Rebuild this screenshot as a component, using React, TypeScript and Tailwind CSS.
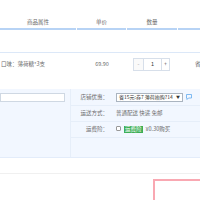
import React from 'react';

const font = { fontFamily: '"Noto Sans CJK SC", "Noto Sans", sans-serif' };

export default function App() {
  return (
    <div className="w-[200px] h-[200px] overflow-hidden bg-white text-[5.5px] text-[#6b6b6b]" style={font}>
      <div className="h-[17px]" />
      {/* header */}
      <div className="flex h-[13px] gap-px">
        <div className="w-[76px] shrink-0 border-b-2 border-[#b7d3f5] flex items-center justify-center">商品属性</div>
        <div className="w-[49px] shrink-0 border-b-2 border-[#b7d3f5] flex items-center justify-center">单价</div>
        <div className="w-[50px] shrink-0 border-b-2 border-[#b7d3f5] flex items-center justify-center">数量</div>
        <div className="flex-1 border-b-2 border-[#b7d3f5]" />
      </div>
      <div className="h-[22px]" />
      {/* item row */}
      <div className="border-t border-[#dce8f8] flex items-center h-[31px] pb-[8px]">
        <div className="w-[77px] shrink-0 pl-px">口味：薄荷糖*3支</div>
        <div className="w-[50px] shrink-0 text-center">69.90</div>
        <div className="w-[68px] shrink-0 flex items-center pl-[6px]">
          <div className="flex h-[13px] border border-[#d7dfea] text-[#999]">
            <div className="w-[10px] flex items-center justify-center border-r border-[#d7dfea] bg-[#fafafa]">-</div>
            <div className="w-[17px] flex items-center justify-center text-[#333]">1</div>
            <div className="w-[8px] flex items-center justify-center border-l border-[#d7dfea] text-[#555]">+</div>
          </div>
        </div>
        <div className="text-[#555] whitespace-nowrap">省</div>
      </div>
      <div className="h-[6px]" />
      {/* shop band */}
      <div className="bg-[#f2f7ff] border-b border-[#e3ecfa] flex h-[69px]">
        <div className="w-[71px] shrink-0 border-r border-[#e6eef9] pt-[4px]">
          <div className="h-[9px] w-[65px] bg-white border border-[#cfd8e3]" />
        </div>
        <div className="flex-1 flex flex-col">
          <div className="h-[17px] flex items-center border-b border-[#e6eef9]">
            <div className="w-[45px] text-right pr-[8px] whitespace-nowrap">店铺优惠：</div>
            <div className="w-[67px] h-[9px] bg-white border border-[#aab4c0] flex items-center px-[2px] text-[#333] text-[5px] justify-between whitespace-nowrap overflow-hidden">
              <span>省15元:券7 薄荷抬购?14</span>
              <span className="text-[4px]">▼</span>
            </div>
            <svg width="6" height="6" viewBox="0 0 12 12" className="ml-[3px]">
              <path d="M1 1h10v7H5l-3 3V8H1z" fill="none" stroke="#5aa7ee" strokeWidth="1.5" />
            </svg>
          </div>
          <div className="h-[16px] flex items-center border-b border-[#e6eef9]">
            <div className="w-[45px] text-right pr-[8px] whitespace-nowrap">运送方式：</div>
            <div>普通配送 快递 免邮</div>
          </div>
          <div className="h-[16px] flex items-center border-b border-[#e6eef9]">
            <div className="w-[45px] text-right pr-[8px] whitespace-nowrap">运费险：</div>
            <div className="w-[5px] h-[5px] border border-[#999] bg-white rounded-[1px] mr-[3px] -mt-[3px]" />
            <div className="bg-[#3dae56] text-white px-[1px] mr-[3px] leading-[7px]">运费险</div>
            <div>¥0.30购买</div>
          </div>
        </div>
      </div>
      <div className="h-[16px] border-b border-[#f0f0f0]" />
      <div className="flex pt-[5px]">
        <div className="w-[153px] shrink-0" />
        <div className="flex-1 h-[40px] border-t-2 border-l-2 border-[#f9a8b2]" />
      </div>
    </div>
  );
}
